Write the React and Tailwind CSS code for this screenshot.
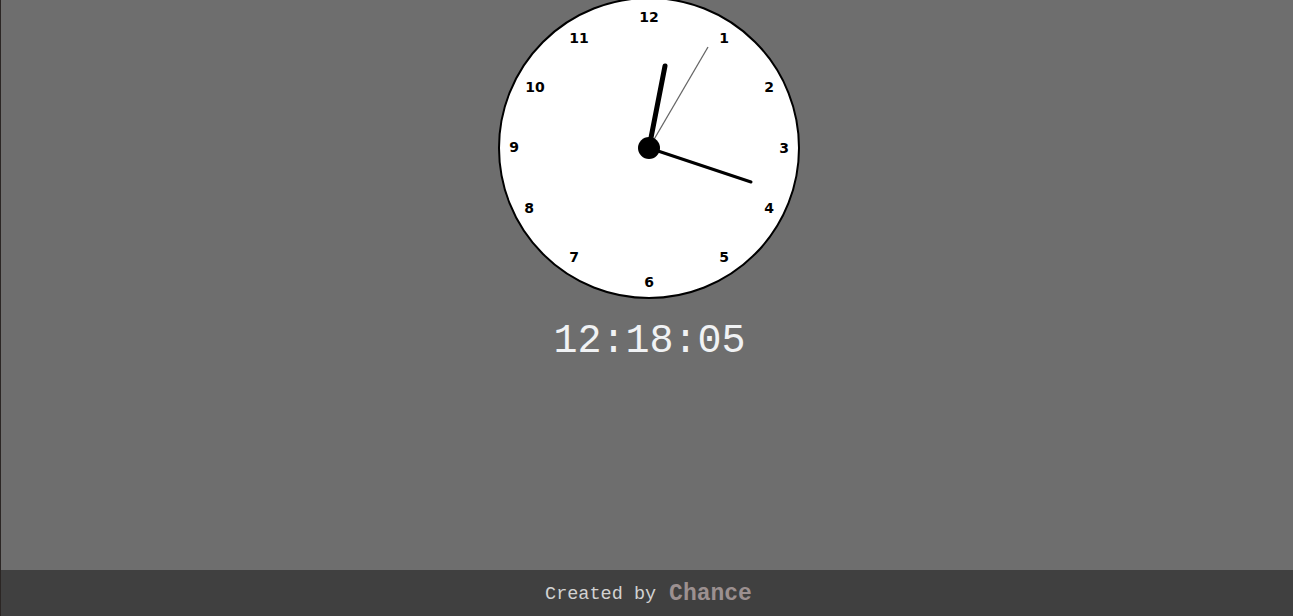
const numbers = [
  { n: "12", x: 151, y: 20 },
  { n: "1", x: 226, y: 41 },
  { n: "2", x: 271, y: 90 },
  { n: "3", x: 286, y: 151 },
  { n: "4", x: 271, y: 211 },
  { n: "5", x: 226, y: 260 },
  { n: "6", x: 151, y: 285 },
  { n: "7", x: 76, y: 260 },
  { n: "8", x: 31, y: 211 },
  { n: "9", x: 16, y: 150 },
  { n: "10", x: 37, y: 90 },
  { n: "11", x: 81, y: 41 },
];

function Clock() {
  return (
    <svg width="304" height="304" viewBox="-1 -1 304 304" className="block">
      <circle cx="151" cy="151" r="150" fill="#ffffff" stroke="#000000" strokeWidth="2" />
      {numbers.map((d) => (
        <text
          key={d.n}
          x={d.x}
          y={d.y}
          textAnchor="middle"
          dominantBaseline="central"
          fontFamily="'DejaVu Sans', sans-serif"
          fontWeight="700"
          fontSize="14"
          fill="#000000"
        >
          {d.n}
        </text>
      ))}
      {/* hour hand */}
      <line x1="151" y1="151" x2="167" y2="69" stroke="#000" strokeWidth="5" strokeLinecap="round" />
      {/* minute hand */}
      <line x1="151" y1="151" x2="253" y2="185" stroke="#000" strokeWidth="3" strokeLinecap="round" />
      {/* second hand */}
      <line x1="151" y1="151" x2="210" y2="50" stroke="#666" strokeWidth="1.3" />
      <circle cx="151" cy="151" r="11" fill="#000" />
    </svg>
  );
}

export default function App() {
  return (
    <div className="h-screen flex flex-col bg-[#6e6e6e] border-l border-[#2b2624] overflow-hidden">
      {/* Main */}
      <div className="flex-1 flex flex-col items-center">
        <div className="-mt-[4px] ml-[3px]">
          <Clock />
        </div>
        <div
          className="mt-[18px] ml-[5px] text-[40px] leading-[48px] text-[#f0f2f4]"
          style={{ fontFamily: "'Liberation Mono', monospace" }}
        >
          12:18:05
        </div>
      </div>

      {/* Footer */}
      <div className="h-[46px] bg-[#404040] flex items-center justify-center gap-[13px] pt-[3px] pl-[3px]">
        <span className="text-[18.5px] text-[#d2d2d2]" style={{ fontFamily: "'Liberation Mono', monospace" }}>
          Created by
        </span>
        <span
          className="text-[23px] font-bold text-[#9c9090]"
          style={{ fontFamily: "'Liberation Mono', monospace" }}
        >
          Chance
        </span>
      </div>
    </div>
  );
}
